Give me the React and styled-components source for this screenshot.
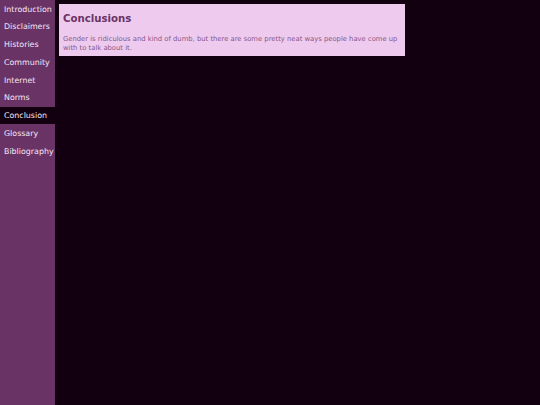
import React from "react";
import styled, { createGlobalStyle } from "styled-components";

const Global = createGlobalStyle`
  html, body {
    margin: 0;
    padding: 0;
    background: #120010;
    font-family: "DejaVu Sans", Verdana, sans-serif;
  }
`;

const Page = styled.div`
  display: flex;
  min-height: 405px;
`;

const Nav = styled.nav`
  width: 55px;
  flex-shrink: 0;
  background: #6a3366;
  display: flex;
  flex-direction: column;
`;

const NavItem = styled.a`
  display: block;
  height: 17.75px;
  box-sizing: border-box;
  padding: 4.5px 0 0 4px;
  line-height: 10px;
  font-size: 7.9px;
  color: #f4e4f2;
  text-decoration: none;
  white-space: nowrap;
  background: ${(p) => (p.$active ? "#120010" : "transparent")};
`;

const Main = styled.main`
  flex: 1;
  padding: 4px;
`;

const Card = styled.section`
  width: 338px;
  background: #eecbee;
  padding: 8px 4px 4px 4px;
`;

const Title = styled.h1`
  margin: 0 0 10px 0;
  font-size: 10.2px;
  line-height: 13px;
  font-weight: bold;
  color: #6a3366;
`;

const Text = styled.p`
  margin: 0;
  font-size: 6.8px;
  line-height: 8.5px;
  color: #86568a;
`;

const links = [
  "Introduction",
  "Disclaimers",
  "Histories",
  "Community",
  "Internet",
  "Norms",
  "Conclusion",
  "Glossary",
  "Bibliography",
];

export default function App() {
  return (
    <>
      <Global />
      <Page>
        <Nav>
          {links.map((l) => (
            <NavItem key={l} href="#" $active={l === "Conclusion"}>
              {l}
            </NavItem>
          ))}
        </Nav>
        <Main>
          <Card>
            <Title>Conclusions</Title>
            <Text>
              Gender is ridiculous and kind of dumb, but there are some pretty
              neat ways people have come up with to talk about it.
            </Text>
          </Card>
        </Main>
      </Page>
    </>
  );
}
